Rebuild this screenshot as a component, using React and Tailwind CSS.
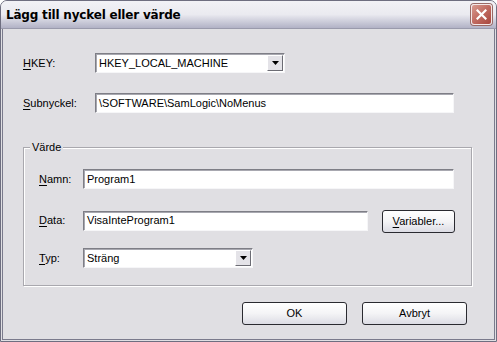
const font = { fontFamily: '"Liberation Sans", Arial, sans-serif' };

const Mn = ({ children }) => <span className="underline underline-offset-[2px]">{children}</span>;

const Field = ({ value, className = '' }) => (
    <div className={`h-[20px] bg-white border border-t-[#7e7e86] border-l-[#7e7e86] border-b-[#f6f6f8] border-r-[#f6f6f8] shadow-[inset_1px_1px_0_#a8a8b0] flex items-center pl-[3px] text-[11px] text-black ${className}`}>
        {value}
    </div>
);

const Combo = ({ value, className = '' }) => (
    <div className={`h-[20px] bg-white border border-t-[#7e7e86] border-l-[#7e7e86] border-b-[#f6f6f8] border-r-[#f6f6f8] shadow-[inset_1px_1px_0_#a8a8b0] flex items-center text-[11px] text-black ${className}`}>
        <span className="flex-1 pl-[3px]">{value}</span>
        <div className="w-[16px] h-[16px] mr-[1px] bg-[#e4e3e8] border border-t-white border-l-white border-b-[#6c6c74] border-r-[#6c6c74] flex items-center justify-center">
            <svg width="7" height="4" viewBox="0 0 7 4"><path d="M0 0h7L3.5 4z" fill="#000" /></svg>
        </div>
    </div>
);

const Button = ({ children, className = '' }) => (
    <div className={`h-[23px] rounded-[3px] border border-[#2a2a30] bg-gradient-to-b from-white via-[#f4f4f6] to-[#dcdce4] flex items-center justify-center text-[11px] text-black ${className}`}>
        {children}
    </div>
);

export default function App() {
    return (
        <div className="w-[497px] h-[342px] bg-white" style={font}>
            <div className="w-full h-full rounded-t-[7px] border border-[#6e6e80] bg-[#e0dfe3] flex flex-col overflow-hidden">
                {/* Title bar */}
                <div className="h-[28px] shrink-0 bg-gradient-to-b from-[#f2f2f6] via-[#eaeaf0] to-[#b2b2c6] flex items-center justify-between pl-[5px] pr-[3px] border-b border-[#9a9aac]">
                    <span className="font-bold text-black tracking-[-0.2px]" style={{ fontFamily: '"DejaVu Sans", "Liberation Sans", sans-serif', fontSize: '12px' }}>
                        Lägg till nyckel eller värde
                    </span>
                    <div className="w-[21px] h-[21px] mr-[1px] rounded-[3px] border border-[#f4e8e8] bg-gradient-to-br from-[#d89a90] via-[#c06a60] to-[#a8463e] shadow-[0_0_0_1px_#9a6a66] flex items-center justify-center">
                        <svg width="11" height="11" viewBox="0 0 11 11">
                            <path d="M1.5 1.5l8 8M9.5 1.5l-8 8" stroke="#fff" strokeWidth="2.2" strokeLinecap="square" />
                        </svg>
                    </div>
                </div>

                {/* Body */}
                <div className="flex-1 mx-[1px] mb-[1px] border-x border-b border-[#7a7a8c] flex flex-col pl-[20px] text-[11px] text-black">
                    <div className="flex items-center mt-[24px]">
                        <span className="w-[72px]"><Mn>H</Mn>KEY:</span>
                        <Combo value="HKEY_LOCAL_MACHINE" className="w-[190px]" />
                    </div>
                    <div className="flex items-center mt-[20px]">
                        <span className="w-[72px]"><Mn>S</Mn>ubnyckel:</span>
                        <Field value="\SOFTWARE\SamLogic\NoMenus" className="w-[359px]" />
                    </div>

                    {/* Group box */}
                    <div className="relative mt-[34px] w-[449px] h-[139px] border border-[#a9a8ae] shadow-[inset_1px_1px_0_#fff,1px_1px_0_#fff] pl-[15px]">
                        <span className="absolute -top-[8px] left-[6px] bg-[#e0dfe3] px-[2px] leading-[14px]">Värde</span>
                        <div className="flex items-center mt-[21px]">
                            <span className="w-[44px]"><Mn>N</Mn>amn:</span>
                            <Field value="Program1" className="w-[371px]" />
                        </div>
                        <div className="flex items-center mt-[19px]">
                            <span className="w-[44px]"><Mn>D</Mn>ata:</span>
                            <Field value="VisaInteProgram1" className="w-[285px]" />
                            <Button className="ml-[14px] w-[73px] h-[23px] mt-[2px]"><span><Mn>V</Mn>ariabler...</span></Button>
                        </div>
                        <div className="flex items-center mt-[15px]">
                            <span className="w-[44px]"><Mn>T</Mn>yp:</span>
                            <Combo value="Sträng" className="w-[170px]" />
                        </div>
                    </div>

                    <div className="flex justify-end gap-[15px] mt-[16px] pr-[27px]">
                        <Button className="w-[105px]">OK</Button>
                        <Button className="w-[105px]">Avbryt</Button>
                    </div>
                </div>
            </div>
        </div>
    );
}
